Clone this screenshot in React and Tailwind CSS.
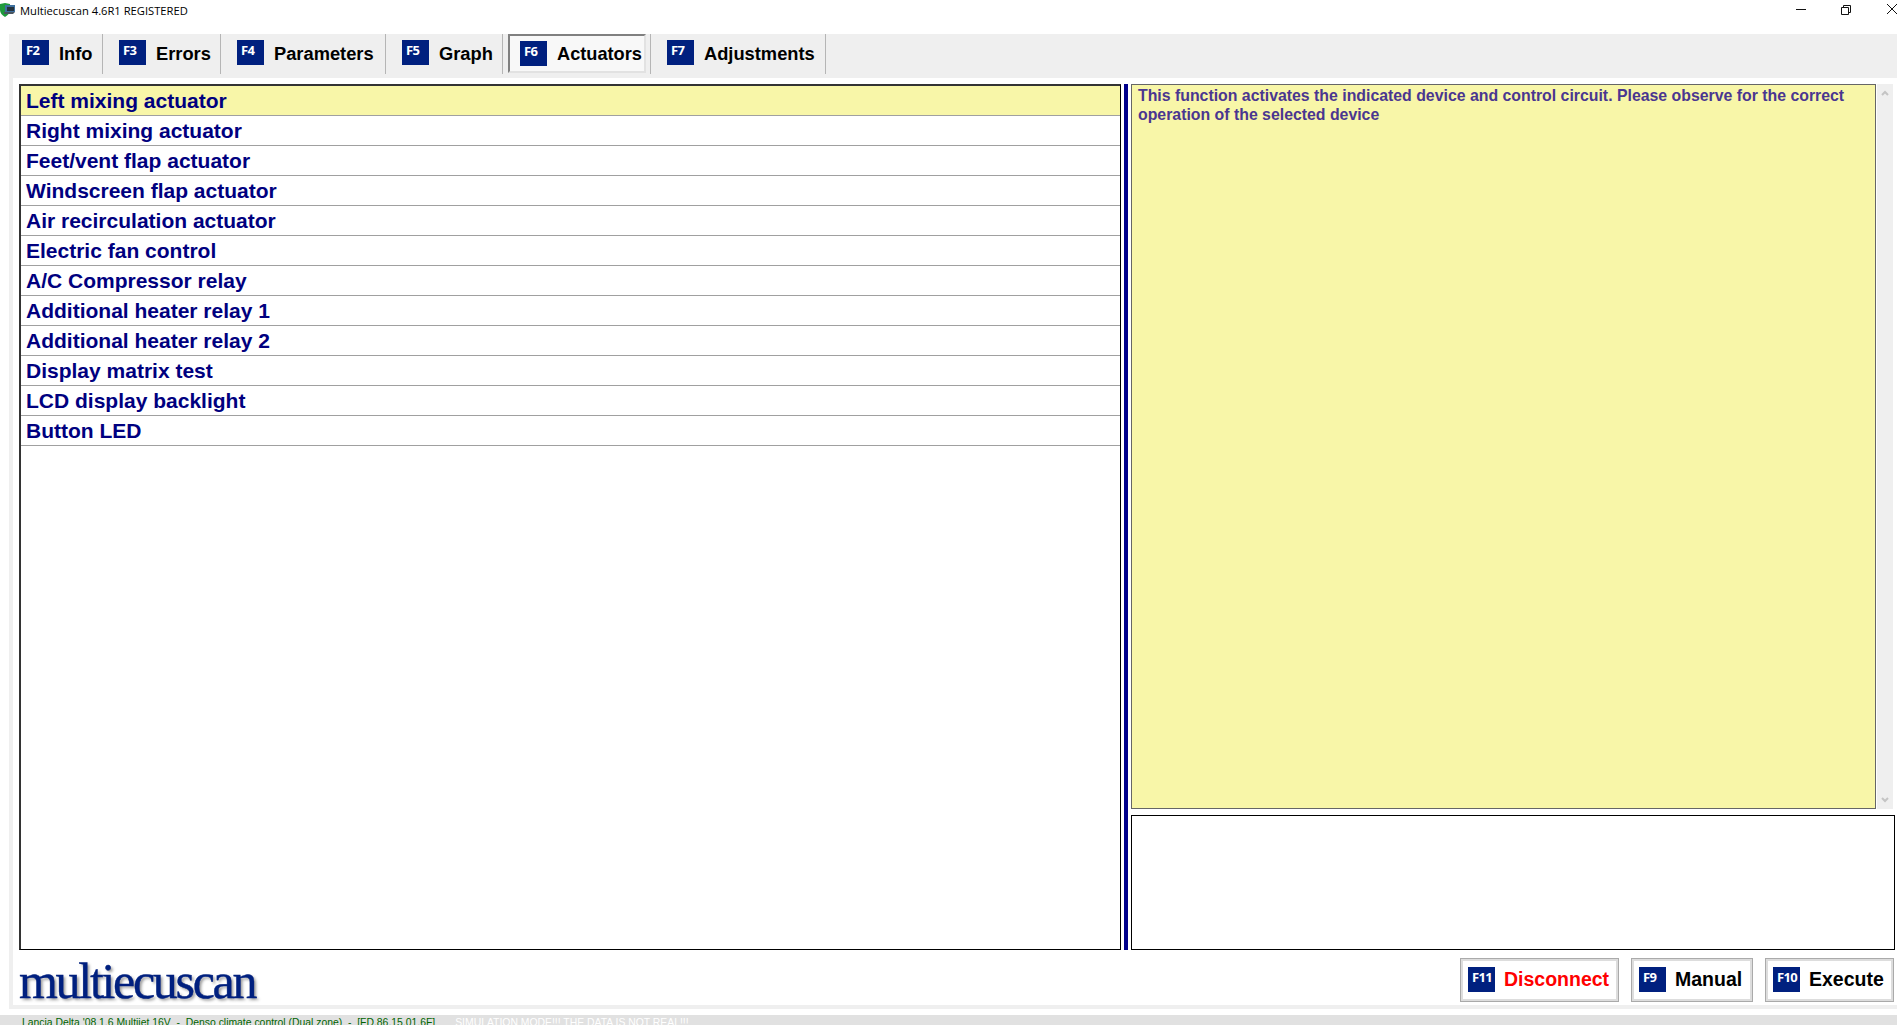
import React from "react";

const tabs = [
  { key: "F2", label: "Info", w: "w-[94px]", pad: "pl-[13px]" },
  { key: "F3", label: "Errors", w: "w-[118px]", pad: "pl-[16px]" },
  { key: "F4", label: "Parameters", w: "w-[165px]", pad: "pl-[16px]" },
  { key: "F5", label: "Graph", w: "w-[117px]", pad: "pl-[16px]" },
  { key: "F6", label: "Actuators", w: "w-[148px]", active: true },
  { key: "F7", label: "Adjustments", w: "w-[175px]", pad: "pl-[16px]" },
];

const actuators = [
  "Left mixing actuator",
  "Right mixing actuator",
  "Feet/vent flap actuator",
  "Windscreen flap actuator",
  "Air recirculation actuator",
  "Electric fan control",
  "A/C Compressor relay",
  "Additional heater relay 1",
  "Additional heater relay 2",
  "Display matrix test",
  "LCD display backlight",
  "Button LED",
];

const KeyBadge = ({ name }) => (
  <span className="flex h-[25px] w-[27px] shrink-0 items-start bg-[#00207f] pl-[4px] pt-[2px] font-['Open_Sans',sans-serif] text-[13px] leading-[16px] font-bold tracking-[-0.6px] text-white">
    {name}
  </span>
);

const Tab = ({ tab }) => {
  if (tab.active) {
    return (
      <div className={`${tab.w} flex h-[40px] items-start border-r border-[#b5b5b5] pl-[5px]`}>
        <div className="flex h-[39px] w-[138px] items-start gap-[10px] border-2 border-t-[#808080] border-l-[#808080] border-r-[#e2e2e2] border-b-[#e2e2e2] bg-[#f8f8f8] pl-[10px] pt-[5px] text-[18.2px] leading-[27px] font-bold text-black">
          <KeyBadge name={tab.key} />
          {tab.label}
        </div>
      </div>
    );
  }
  return (
    <div className={`${tab.w} ${tab.pad} flex h-[40px] items-start gap-[10px] border-r border-[#b5b5b5] pt-[6px] text-[18.3px] leading-[27px] font-bold text-black`}>
      <KeyBadge name={tab.key} />
      {tab.label}
    </div>
  );
};

const ActionButton = ({ name, label, red, w }) => (
  <button className={`${w} flex h-[44px] items-center gap-[9px] border border-[#aaaaaa] bg-white pb-[1px] pl-[7px] text-[19.5px] font-bold outline-2 -outline-offset-3 outline-[#dddddd] ${red ? "text-[#ff0000]" : "text-black"}`}>
    <KeyBadge name={name} />
    {label}
  </button>
);

export default function App() {
  return (
    <div className="flex h-[1025px] w-[1897px] flex-col overflow-hidden bg-white font-['Liberation_Sans',sans-serif]">
      {/* Title bar */}
      <div className="flex h-[34px] shrink-0 items-start">
        <svg width="20" height="20" viewBox="0 0 20 20" className="shrink-0">
          <path d="M0 4l5-1 5 1v6c0 3-2 5-5 7-3-2-5-4-5-7z" fill="#1f9a3c" />
          <path d="M5 5h10v7H5z" fill="#3d6f9e" />
          <path d="M7 7h7v4H7z" fill="#26323c" />
          <path d="M4 12h11l-2 2H4z" fill="#4a5560" />
        </svg>
        <span className="font-['Open_Sans',sans-serif] text-[11.2px] leading-[21px] text-black">Multiecuscan 4.6R1 REGISTERED</span>
        <div className="ml-auto flex">
          <svg width="101" height="20" viewBox="0 0 101 20" fill="none" stroke="#111" strokeWidth="1">
            <path d="M0 9.5h10" />
            <path d="M45.5 7.5h7v7h-7zM47.5 7V5.5h7v7H53" />
            <path d="M91 4l10 10M101 4L91 14" />
          </svg>
        </div>
      </div>

      {/* Main frame */}
      <div className="ml-[9px] flex h-[975px] shrink-0 flex-col bg-[#efefef] pb-[4px] pl-[4px]">
        <div className="-ml-[4px] flex h-[44px] shrink-0">
          {tabs.map((tab) => (
            <Tab key={tab.key} tab={tab} />
          ))}
        </div>

        <div className="flex min-h-0 flex-1 flex-col bg-white pl-[6px] pt-[6px]">
          <div className="flex h-[866px] shrink-0">
            {/* Actuator list */}
            <div className="h-full w-[1102px] shrink-0 border border-t-2 border-l-2 border-t-[#333] border-l-[#333] border-r-black border-b-black">
              {actuators.map((name, i) => (
                <div
                  key={name}
                  className={`flex h-[30px] items-center border-b border-[#a0a0a0] pl-[5px] pt-[1px] text-[21px] font-bold text-[#00007f] ${i === 0 ? "bg-[#f8f6a8]" : ""}`}
                >
                  {name}
                </div>
              ))}
            </div>

            {/* Splitter */}
            <div className="ml-[3px] w-[4px] shrink-0 bg-[#00008b]" />

            {/* Right column */}
            <div className="ml-[3px] flex w-[764px] shrink-0 flex-col">
              <div className="flex h-[725px] shrink-0">
                <div className="w-[745px] shrink-0 border border-[#666666] bg-[#f8f6a8] pl-[6px] pr-[10px] pt-[1px] text-[15.85px] leading-[19px] font-bold text-[#4a3690]">
                  This function activates the indicated device and control circuit. Please observe for the correct operation of the selected device
                </div>
                <div className="ml-[1px] flex w-[16px] flex-col items-center justify-between bg-[#efefef] py-[6px]">
                  <svg width="8" height="6" viewBox="0 0 8 6" fill="none" stroke="#c4c4c4" strokeWidth="2"><path d="M1 5l3-3 3 3" /></svg>
                  <svg width="8" height="6" viewBox="0 0 8 6" fill="none" stroke="#c4c4c4" strokeWidth="2"><path d="M1 1l3 3 3-3" /></svg>
                </div>
              </div>
              <div className="mt-[6px] min-h-0 flex-1 border border-black bg-white" />
            </div>
          </div>

          {/* Logo and action buttons */}
          <div className="flex flex-1 items-start justify-between pr-[3px]">
            <span className="mt-[9px] font-['Liberation_Serif',serif] text-[50px] leading-[44px] tracking-[-2.3px] text-[#00207f] [-webkit-text-stroke:0.4px_#00207f] [text-shadow:2px_2px_3px_#999]">
              multiecuscan
            </span>
            <div className="mt-[8px] flex gap-[12px]">
              <ActionButton name="F11" label="Disconnect" red w="w-[159px]" />
              <ActionButton name="F9" label="Manual" w="w-[122px]" />
              <ActionButton name="F10" label="Execute" w="w-[129px]" />
            </div>
          </div>
        </div>
      </div>

      <div className="mt-[6px] flex h-[10px] shrink-0 gap-[20px] overflow-hidden whitespace-pre bg-[#e1e1e1] pl-[22px] text-[10.4px] leading-[16px] text-[#006400]">
        <span>Lancia Delta '08 1.6 Multijet 16V  -  Denso climate control (Dual zone)  -  [FD.86.15.01.6F]</span>
        <span className="text-white">SIMULATION MODE!!! THE DATA IS NOT REAL!!!</span>
      </div>
    </div>
  );
}
